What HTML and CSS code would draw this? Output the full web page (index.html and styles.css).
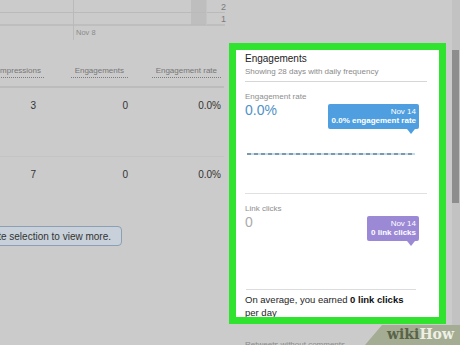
FILE: index.html
```html
<!DOCTYPE html>
<html>
<head>
<meta charset="utf-8">
<link rel="stylesheet" href="styles.css">
</head>
<body>
<div class="page">
  <main class="main">
    <svg class="chart" width="229" height="45" viewBox="0 0 229 45">
      <rect x="191" y="0" width="15" height="25" fill="#bebebe"/>
      <line x1="0" y1="12.5" x2="225" y2="12.5" stroke="#bababa" stroke-width="1"/>
      <line x1="0" y1="25" x2="225" y2="25" stroke="#bababa" stroke-width="1.5"/>
      <line x1="73.5" y1="0" x2="73.5" y2="40" stroke="#bababa" stroke-width="1"/>
      <line x1="206.5" y1="0" x2="206.5" y2="25" stroke="#c4c4c4" stroke-width="1"/>
      <text x="221" y="9.5" class="axis">2</text>
      <text x="221" y="22" class="axis">1</text>
      <text x="76" y="35" class="date">Nov 8</text>
    </svg>

    <div class="trow thead">
      <div class="cell c1"><span class="th">Impressions</span></div>
      <div class="cell c2"><span class="th">Engagements</span></div>
      <div class="cell c3"><span class="th">Engagement rate</span></div>
    </div>
    <div class="trow tbody first">
      <div class="cell c1 v">3</div>
      <div class="cell c2">0</div>
      <div class="cell c3">0.0%</div>
    </div>
    <div class="trow tbody second">
      <div class="cell c1 v">7</div>
      <div class="cell c2">0</div>
      <div class="cell c3">0.0%</div>
    </div>
    <div class="btnwrap"><button class="btn">Update selection to view more.</button></div>
  </main>

  <aside class="side">
    <section class="card">
      <h2 class="title">Engagements</h2>
      <p class="sub">Showing 28 days with daily frequency</p>
      <div class="divider d1"></div>
      <div class="metric m1">
        <div class="label">Engagement rate</div>
        <div class="big blue">0.0%</div>
        <div class="dashline"></div>
        <div class="tip tip-blue">
          <div class="tdate">Nov 14</div>
          <div class="tval">0.0% engagement rate</div>
        </div>
      </div>
      <div class="divider d2"></div>
      <div class="metric m2">
        <div class="label">Link clicks</div>
        <div class="big gray">0</div>
        <div class="tip tip-purple">
          <div class="tdate">Nov 14</div>
          <div class="tval">0 link clicks</div>
        </div>
      </div>
      <div class="divider d3"></div>
      <p class="avg">On average, you earned <b>0 link clicks</b><br>per day</p>
    </section>
    <div class="next">Retweets without comments</div>
  </aside>

  <div class="gutter"></div>
  <div class="scroll"><div class="thumb"></div></div>
</div>
<div class="wm"><span class="wiki">wiki</span><span class="how">How</span></div>
</body>
</html>
```

FILE: styles.css
```css
html, body {
  margin: 0;
  padding: 0;
}
body {
  width: 460px;
  height: 345px;
  overflow: hidden;
  position: relative;
  background: #cbcbcb;
  font-family: "Liberation Sans", Arial, sans-serif;
  color: #333;
}
.page {
  display: flex;
  height: 345px;
}
.main {
  width: 229px;
  flex: none;
  overflow: hidden;
}
.chart {
  display: block;
}
.axis {
  font-family: "Liberation Sans", Arial, sans-serif;
  font-size: 9px;
  fill: #7a7a7a;
}
.date {
  font-family: "Liberation Sans", Arial, sans-serif;
  font-size: 7.5px;
  fill: #8a8a8a;
}
.trow {
  display: flex;
  width: 224px;
}
.cell {
  display: flex;
  justify-content: flex-end;
  white-space: nowrap;
}
.c1 { width: 46px; padding-right: 2px; box-sizing: border-box; }
.c2 { width: 84px; padding-right: 2px; box-sizing: border-box; }
.c3 { width: 94px; padding-right: 3px; box-sizing: border-box; }
.thead {
  margin-top: 19px;
  padding-bottom: 8px;
  border-bottom: 2px solid #bcbcbc;
}
.th {
  font-size: 8px;
  line-height: 13px;
  color: #767676;
  padding: 0 4px;
  border-bottom: 1px dotted #7d7d7d;
}
.c1 .th { padding-right: 3px; }
.tbody {
  font-size: 10px;
  line-height: 14px;
  color: #333;
  padding-top: 11px;
  box-sizing: border-box;
}
.tbody .v { padding-right: 10px; }
.first {
  height: 69px;
  border-bottom: 1px solid #c4c4c4;
}
.second {
  height: 50px;
}
.btnwrap {
  display: flex;
  justify-content: flex-end;
  width: 122px;
  margin-top: 19px;
}
.btn {
  flex: none;
  height: 20px;
  margin: 0;
  padding: 0 10px 0 8px;
  font-family: "Liberation Sans", Arial, sans-serif;
  font-size: 10px;
  color: #333;
  background: #c8d1da;
  border: 1px solid #8d9fb3;
  border-radius: 4px;
  white-space: nowrap;
}

.side {
  width: 217px;
  flex: none;
  padding-top: 43px;
  box-sizing: border-box;
}
.card {
  height: 281px;
  box-sizing: border-box;
  border: 7px solid #2fe32f;
  background: #fff;
  padding: 2px 12px 0 9px;
  overflow: hidden;
  margin: 0;
}
.title {
  margin: 0;
  font-size: 10px;
  line-height: 14px;
  font-weight: normal;
  color: #222;
}
.sub {
  margin: 0;
  font-size: 8px;
  line-height: 11px;
  color: #8a8a8a;
}
.divider {
  height: 1px;
  background: #d6d6d6;
}
.d1 { margin-top: 4px; }
.d2 { background: #e0e0e0; }
.d3 { width: 170px; margin-left: 1px; background: #dcdcdc; }
.metric {
  position: relative;
  padding-top: 10px;
}
.m1 { height: 111px; box-sizing: border-box; }
.m2 { height: 95px; box-sizing: border-box; }
.label {
  font-size: 8px;
  line-height: 10px;
  color: #8e8e8e;
}
.big {
  font-size: 14px;
  line-height: 16px;
}
.blue { color: #4f92c6; }
.gray { color: #ababab; }
.dashline {
  margin-top: 35px;
  margin-left: 2px;
  width: 168px;
  height: 2px;
  background: repeating-linear-gradient(90deg, #7d97af 0 4px, #bfdcf2 4px 7px);
}
.tip {
  position: absolute;
  top: 22px;
  right: 8px;
  height: 25px;
  box-sizing: border-box;
  padding: 2.5px 3px 0 3px;
  border-radius: 2px;
  color: #fff;
  text-align: right;
  font-size: 8px;
  line-height: 9.5px;
  white-space: nowrap;
}
.tip::after {
  content: "";
  position: absolute;
  right: 4px;
  bottom: -5px;
  border-left: 4px solid transparent;
  border-right: 4px solid transparent;
  border-top: 5px solid currentColor;
}
.tip-blue { width: 91px; background: #4f9fe0; }
.tip-blue::after { border-top-color: #4f9fe0; }
.tip-purple { width: 52px; background: #9b89d6; }
.tip-purple::after { border-top-color: #9b89d6; }
.tval { font-weight: bold; }
.avg {
  margin: 4px 0 0 0;
  font-size: 9.5px;
  line-height: 12.5px;
  color: #1e1e1e;
}
.avg b { color: #111; }
.next {
  margin-top: 16px;
  padding-left: 16px;
  font-size: 8px;
  line-height: 10px;
  color: #8a8a8a;
}
.gutter {
  width: 6px;
  flex: none;
}
.scroll {
  width: 8px;
  flex: none;
  background: #c2c2c2;
}
.thumb {
  margin-top: 50px;
  width: 7px;
  height: 153px;
  background: #8d8d8d;
}
.wm {
  position: absolute;
  left: 365px;
  top: 325px;
  width: 95px;
  height: 20px;
  box-sizing: border-box;
  padding-left: 22px;
  background: #a4ad93;
  clip-path: polygon(17px 0, 100% 0, 100% 100%, 0 100%);
  font-family: "DejaVu Serif", "Liberation Serif", serif;
  font-weight: bold;
  font-size: 14px;
  line-height: 19px;
  white-space: nowrap;
}
.wiki { color: #596348; }
.how { color: #eef0e6; }
```
